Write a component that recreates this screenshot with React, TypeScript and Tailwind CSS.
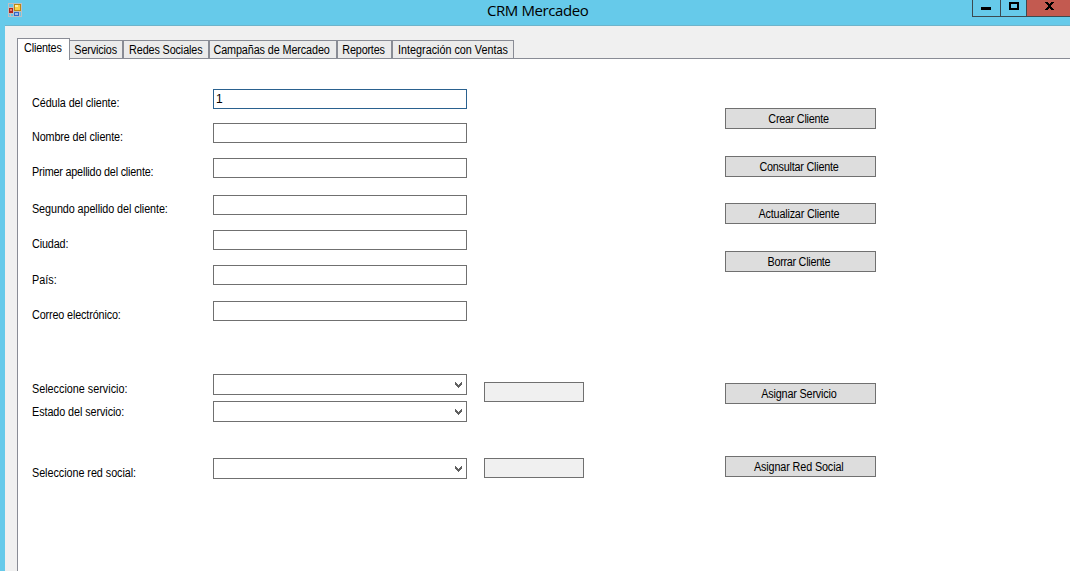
import { useState } from "react";

const tabs = [
  { name: "Servicios", box: "w-[53px] border-l-0", text: "tracking-[-0.15px]" },
  { name: "Redes Sociales", box: "w-[86px]", text: "tracking-[-0.13px]" },
  { name: "Campañas de Mercadeo", box: "w-[128px] pr-[2px]", text: "tracking-[-0.11px]" },
  { name: "Reportes", box: "w-[55px] pr-px", text: "tracking-[-0.2px]" },
  { name: "Integración con Ventas", box: "w-[122px]", text: "tracking-[-0.01px]" },
];

const labels = [
  { text: "Cédula del cliente:", cls: "mt-[36px] tracking-[-0.09px]" },
  { text: "Nombre del cliente:", cls: "mt-[18px] tracking-[-0.13px]" },
  { text: "Primer apellido del cliente:", cls: "mt-[19px] tracking-[-0.21px]" },
  { text: "Segundo apellido del cliente:", cls: "mt-[21px] tracking-[-0.09px]" },
  { text: "Ciudad:", cls: "mt-[19px] tracking-[-0.15px]" },
  { text: "País:", cls: "mt-[20px] tracking-[0.05px]" },
  { text: "Correo electrónico:", cls: "mt-[19px] tracking-[-0.15px]" },
  { text: "Seleccione servicio:", cls: "mt-[58px] tracking-[0px]" },
  { text: "Estado del servicio:", cls: "mt-[7px] tracking-[-0.08px]" },
  { text: "Seleccione red social:", cls: "mt-[45px] tracking-[-0.05px]" },
];

const fields = [
  "mt-[14px]",
  "mt-[15px]",
  "mt-[17px]",
  "mt-[15px]",
  "mt-[15px]",
  "mt-[16px]",
];

const combos = ["mt-[53px]", "mt-[6px]", "mt-[36px]"];

const buttons = [
  { text: "Crear Cliente", cls: "mt-[49px] tracking-[-0.28px]" },
  { text: "Consultar Cliente", cls: "mt-[27px] tracking-[-0.24px]" },
  { text: "Actualizar Cliente", cls: "mt-[26px] tracking-[-0.2px]" },
  { text: "Borrar Cliente", cls: "mt-[27px] tracking-[-0.3px]" },
  { text: "Asignar Servicio", cls: "mt-[111px] tracking-[-0.18px]" },
  { text: "Asignar Red Social", cls: "mt-[52px] tracking-[-0.14px]" },
];

function AppIcon() {
  return (
    <svg width="14" height="14" viewBox="0 0 14 14" shapeRendering="crispEdges">
      <rect width="14" height="14" fill="#bcc0c4" />
      <rect x="1" y="1" width="4" height="3" fill="#63c5e8" />
      <rect x="1" y="11" width="1" height="2" fill="#63c5e8" />
      <rect x="3" y="11" width="2" height="2" fill="#63c5e8" />
      <rect x="12" y="9" width="1" height="4" fill="#63c5e8" />
      <rect x="1" y="5" width="4" height="5" fill="#b3261e" />
      <rect x="2" y="6" width="2" height="2" fill="#e8786c" />
      <rect x="6" y="1" width="7" height="7" fill="#b98613" />
      <rect x="7" y="2" width="5" height="5" fill="#f8ce45" />
      <rect x="7" y="2" width="3" height="2" fill="#fff0a4" />
      <rect x="6" y="9" width="5" height="4" fill="#3566c4" />
      <rect x="7" y="10" width="3" height="2" fill="#9cbcf4" />
    </svg>
  );
}

function TitleBar() {
  return (
    <header className="flex h-[25px] shrink-0">
      <div className="w-[200px] pt-[3px] pl-2">
        <AppIcon />
      </div>
      <h1 className="flex-1 pl-[287px] font-['Open_Sans',sans-serif] text-[15px] leading-[20px] tracking-[-0.42px] whitespace-nowrap text-black">
        CRM Mercadeo
      </h1>
      <div className="flex h-[17px] w-[98px] border-b border-l border-[#3c4a50]">
        <button aria-label="Minimizar" className="flex w-7 border-r border-[#3c4a50] pt-[7px] pl-2">
          <span className="h-[3px] w-[10px] bg-black" />
        </button>
        <button aria-label="Maximizar" className="flex w-[26px] border-r border-[#3c4a50] pt-[2px] pl-2">
          <span className="h-2 w-[10px] border-2 border-black" />
        </button>
        <button aria-label="Cerrar" className="flex flex-1 bg-[#c35a50] pt-[2px] pl-[18px]">
          <svg width="9" height="8" viewBox="0 0 9 8" shapeRendering="crispEdges">
            <path
              d="M0 0h3v1h-3zM6 0h3v1h-3zM1 1h3v1h-3zM5 1h3v1h-3zM2 2h5v1h-5zM3 3h3v2h-3zM2 5h5v1h-5zM1 6h3v1h-3zM5 6h3v1h-3zM0 7h3v1h-3zM6 7h3v1h-3z"
              fill="#000"
            />
          </svg>
        </button>
      </div>
    </header>
  );
}

function Combo({ cls }: { cls: string }) {
  return (
    <div className={`flex h-[21px] w-[254px] shrink-0 justify-end border border-[#707070] bg-white pt-[7px] pr-1 ${cls}`}>
      <svg width="7" height="6" viewBox="0 0 7 6" shapeRendering="crispEdges">
        <path d="M0 0h1v1h1v1h1v1h1v-1h1v-1h1v-1h1v3h-1v1h-1v1h-1v1h-1v-1h-1v-1h-1v-1h-1z" fill="#606060" />
      </svg>
    </div>
  );
}

export default function App() {
  const [cedula, setCedula] = useState("1");
  return (
    <div className="flex h-[571px] w-[1070px] flex-col overflow-hidden bg-[#66caea] font-['Liberation_Sans',sans-serif] text-[12px] text-black">
      <TitleBar />
      <main className="ml-[5px] flex flex-1 flex-col border-t border-[#6eb4cb] bg-[#f0f0f0] pt-3 pl-3">
        <nav className="flex h-[20px] shrink-0 items-end">
          <button className="z-10 -mb-[2px] flex h-[22px] w-[53px] shrink-0 justify-center border border-b-0 border-[#898c95] bg-white pr-[2px] leading-[18px] tracking-[-0.2px] whitespace-nowrap">
            <span className="scale-x-90">Clientes</span>
          </button>
          {tabs.map((t) => (
            <button
              key={t.name}
              className={`flex h-[18px] shrink-0 justify-center border border-b-0 border-[#898c95] bg-[#ebebeb] leading-[18px] whitespace-nowrap ${t.box} ${t.text}`}
            >
              <span className="scale-x-90">{t.name}</span>
            </button>
          ))}
        </nav>
        <section className="flex flex-1 border-t border-l border-[#898c95] bg-white">
          <div className="flex w-[195px] flex-col pl-[14px]">
            {labels.map((l) => (
              <label key={l.text} className={`h-4 origin-left scale-x-90 leading-4 whitespace-nowrap ${l.cls}`}>
                {l.text}
              </label>
            ))}
          </div>
          <div className="flex w-[254px] flex-col">
            <input
              value={cedula}
              onChange={(e) => setCedula(e.target.value)}
              className="mt-[30px] h-5 w-[254px] border border-[#2a618f] bg-white px-[2px] outline-none"
            />
            {fields.map((f, i) => (
              <input key={i} className={`h-5 w-[254px] border border-[#707070] bg-white px-[2px] outline-none ${f}`} />
            ))}
            {combos.map((c) => (
              <Combo key={c} cls={c} />
            ))}
          </div>
          <div className="ml-[17px] flex w-[100px] flex-col">
            <div className="mt-[323px] h-5 border border-[#707070] bg-[#f0f0f0]" />
            <div className="mt-[56px] h-5 border border-[#707070] bg-[#f0f0f0]" />
          </div>
          <div className="ml-[141px] flex w-[151px] flex-col">
            {buttons.map((b) => (
              <button
                key={b.text}
                className={`flex h-[21px] justify-center border border-[#707070] bg-[#dddddd] pr-[3px] leading-[20px] whitespace-nowrap ${b.cls}`}
              >
                <span className="scale-x-90">{b.text}</span>
              </button>
            ))}
          </div>
        </section>
      </main>
    </div>
  );
}
